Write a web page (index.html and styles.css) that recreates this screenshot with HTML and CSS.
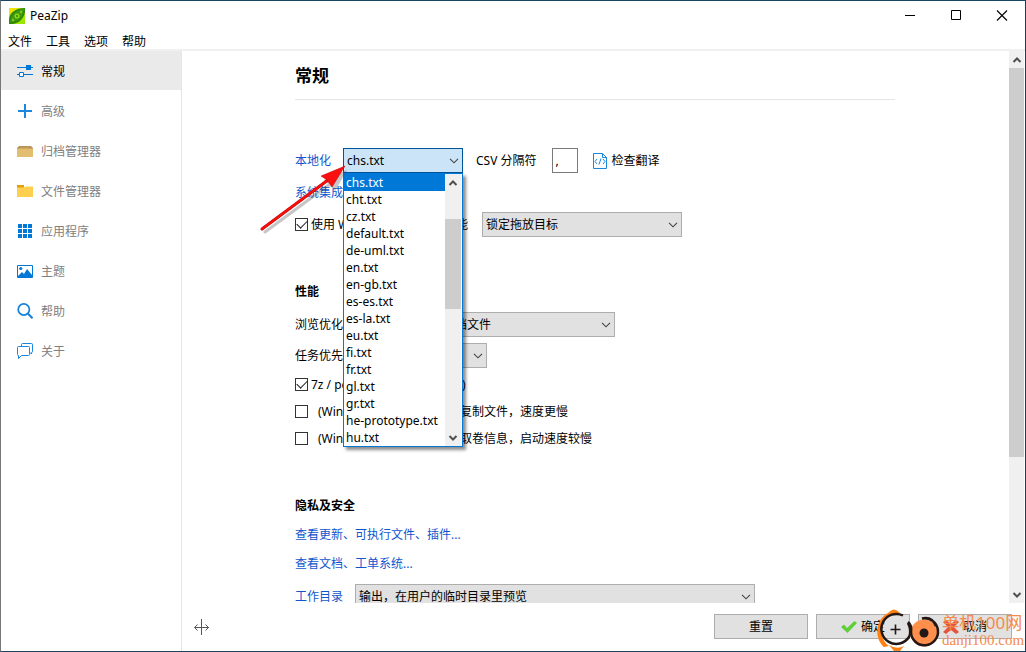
FILE: index.html
```html
<!DOCTYPE html>
<html lang="zh-CN">
<head>
<meta charset="utf-8">
<title>PeaZip</title>
<link rel="stylesheet" href="styles.css">
</head>
<body>
<div class="window">
  <header class="titlebar">
    <svg class="app-icon" width="16" height="16" viewBox="0 0 16 16">
      <defs><linearGradient id="lime" x1="0" y1="0" x2="1" y2="1"><stop offset="0" stop-color="#ffe400"/><stop offset="1" stop-color="#8be800"/></linearGradient></defs>
      <rect width="16" height="16" fill="url(#lime)"/>
      <path d="M0 16V11C1 4 7 0 16 0V4C15 11 9 16 3 16Z" fill="#2f8a0a"/>
      <path d="M1 14C2 7 7 2 15 1C14 9 9 14 1 14Z" fill="#439b14"/>
      <circle cx="8" cy="8" r="2.500" fill="#8fdc10"/><circle cx="8" cy="8" r="1.200" fill="#3f9a10"/>
      <circle cx="12" cy="4" r="1.200" fill="#7fcc18"/><circle cx="4" cy="12" r="1.200" fill="#7fcc18"/>
    </svg>
    <h1 class="app-name">PeaZip</h1>
    <div class="controls">
      <button class="control" aria-label="最小化"><svg width="12" height="12" viewBox="0 0 12 12"><path d="M1 5.500H11" stroke="#000"/></svg></button>
      <button class="control" aria-label="最大化"><svg width="12" height="12" viewBox="0 0 12 12"><path d="M1.500 .5H10.500V9.500H1.500Z" fill="none" stroke="#000"/></svg></button>
      <button class="control" aria-label="关闭"><svg width="12" height="12" viewBox="0 0 12 12"><path d="M1 .5L11 10.500M11 .5L1 10.500" stroke="#000" stroke-width="1.100"/></svg></button>
    </div>
  </header>
  <nav class="menubar">
    <button class="menu">文件</button><button class="menu">工具</button><button class="menu">选项</button><button class="menu">帮助</button>
  </nav>
  <div class="body">
    <nav class="sidebar">
      <button class="side-item active"><svg class="side-icon" viewBox="0 0 16 16"><path d="M0 4.500H9M14 4.500H16M0 11.500H2M7 11.500H16" stroke="#0078d7"/><path d="M9 2H14V7H9Z" fill="#0078d7"/><path d="M2.500 9.500H6.500V13.500H2.500Z" fill="#fff" stroke="#0078d7"/></svg>常规</button>
      <button class="side-item"><svg class="side-icon" viewBox="0 0 16 16"><path d="M1 8H15M8 1V15" stroke="#1a86dc" stroke-width="2"/></svg>高级</button>
      <button class="side-item"><svg class="side-icon" viewBox="0 0 16 16"><path d="M2 3H14L16 5V7H0V5Z" fill="#b4935a"/><path d="M0 5.500H3L4 4.500H12L13 5.500H16V14H0Z" fill="#e3bd70"/><path d="M3 5H13" stroke="#b99555"/></svg>归档管理器</button>
      <button class="side-item"><svg class="side-icon" viewBox="0 0 16 16"><path d="M0 2H7V5H0Z" fill="#e3a008"/><path d="M0 4.500H7L8 3.500H16V14H0Z" fill="#ffcf4f"/></svg>文件管理器</button>
      <button class="side-item"><svg class="side-icon" viewBox="0 0 16 16"><path d="M1 1H5V5H1ZM6 1H10V5H6ZM11 1H15V5H11ZM1 6H5V10H1ZM6 6H10V10H6ZM11 6H15V10H11ZM1 11H5V15H1ZM6 11H10V15H6ZM11 11H15V15H11Z" fill="#0078d7"/></svg>应用程序</button>
      <button class="side-item"><svg class="side-icon" viewBox="0 0 16 16"><path d="M.5 2.500H15.500V14.500H.5Z" fill="#fff" stroke="#0078d7"/><path d="M1 14V13L5 9L7 11L10 6L15 12V14Z" fill="#0078d7"/><circle cx="3.800" cy="5.500" r="1.600" fill="#0078d7"/></svg>主题</button>
      <button class="side-item"><svg class="side-icon" viewBox="0 0 16 16"><circle cx="6.800" cy="6.500" r="5.600" fill="none" stroke="#1480da" stroke-width="1.700"/><path d="M10.800 10.500L15.500 15.200" stroke="#1480da" stroke-width="2"/></svg>帮助</button>
      <button class="side-item"><svg class="side-icon" viewBox="0 0 16 16"><path d="M4.500 3V1.500Q4.500 .5 5.500 .5H14.500Q15.500 .5 15.500 1.500V8.500Q15.500 9.500 14.500 9.500V11L13 9.500" fill="none" stroke="#1a86dc"/><path d="M1.500 3.500H11.500Q12.500 3.500 12.500 4.500V11.500Q12.500 12.500 11.500 12.500H4.500L1.500 15.500V12.500Q.5 12.500 .5 11.500V4.500Q.5 3.500 1.500 3.500Z" fill="none" stroke="#1a86dc"/></svg>关于</button>
    </nav>
    <main class="main">
      <div class="scroll-area">
        <form class="page">
          <h2 class="page-title">常规</h2>
          <div class="row first">
            <a class="link" href="#">本地化</a>
            <div class="combo language">
              <select class="field focused" aria-label="本地化"><option>chs.txt</option></select>
              <svg class="chevron" viewBox="0 0 10 6"><path d="M1 .8L5 4.800L9 .8"/></svg>
              <div class="popup">
                <ul class="options" role="listbox" aria-label="语言文件">
                  <li class="option selected" role="option" aria-selected="true">chs.txt</li>
                  <li class="option" role="option">cht.txt</li>
                  <li class="option" role="option">cz.txt</li>
                  <li class="option" role="option">default.txt</li>
                  <li class="option" role="option">de-uml.txt</li>
                  <li class="option" role="option">en.txt</li>
                  <li class="option" role="option">en-gb.txt</li>
                  <li class="option" role="option">es-es.txt</li>
                  <li class="option" role="option">es-la.txt</li>
                  <li class="option" role="option">eu.txt</li>
                  <li class="option" role="option">fi.txt</li>
                  <li class="option" role="option">fr.txt</li>
                  <li class="option" role="option">gl.txt</li>
                  <li class="option" role="option">gr.txt</li>
                  <li class="option" role="option">he-prototype.txt</li>
                  <li class="option" role="option">hu.txt</li>
                </ul>
                <div class="scrollbar popup-bar">
                  <svg class="arrow" viewBox="0 0 10 6"><path d="M1.500 5L5 1.500L8.500 5"/></svg>
                  <div class="track"><div class="thumb popup-thumb"></div></div>
                  <svg class="arrow" viewBox="0 0 10 6"><path d="M1.500 1L5 4.500L8.500 1"/></svg>
                </div>
              </div>
              <svg class="pointer" width="100" height="76" viewBox="0 0 100 76">
                <g opacity=".3"><path d="M9 70L74 22" stroke="#444" stroke-width="3" stroke-linecap="round"/><path d="M91 8L68 18L79 29Z" fill="#444"/></g>
                <path d="M6 67L72 18" stroke="#c80000" stroke-width="3" stroke-linecap="round"/><path d="M6 67L72 18" stroke="#fa1010" stroke-width="2" stroke-linecap="round"/>
                <path d="M89 4L65 14L71 18L76 25Z" fill="#fa1010" stroke="#b80000" stroke-width=".5"/>
              </svg>
            </div>
            <label class="inline" for="csv">CSV 分隔符</label>
            <input class="csv" id="csv" type="text" value=",">
            <button class="check-translation" type="button"><svg width="14" height="16" viewBox="0 0 14 16"><path d="M.5 .5H9.500L13.500 4.500V15.500H.5Z" fill="#fff" stroke="#1a86dc"/><path d="M9.500 .5V4.500H13.500" fill="none" stroke="#1a86dc"/><path d="M4 6L2 8.500L4 11M10 6L12 8.500L10 11M8 5.500L6 11.500" fill="none" stroke="#1a86dc"/></svg>检查翻译</button>
          </div>
          <div class="row integration"><a class="link" href="#">系统集成</a></div>
          <div class="row">
            <label class="check tight"><input class="box" type="checkbox" checked><span class="lead">使用 Windows 拖放功</span><span>能</span></label>
            <div class="combo drop-target"><select class="field" aria-label="拖放目标"><option>锁定拖放目标</option></select><svg class="chevron" viewBox="0 0 10 6"><path d="M1 .8L5 4.800L9 .8"/></svg></div>
          </div>

          <h3 class="section">性能</h3>
          <div class="row">
            <label for="browse">浏览优化</label>
            <div class="combo browse"><select class="field" id="browse"><option>不展开显示完整归档文件</option></select><svg class="chevron" viewBox="0 0 10 6"><path d="M1 .8L5 4.800L9 .8"/></svg></div>
          </div>
          <div class="row close">
            <label for="priority">任务优先级</label>
            <div class="combo priority"><select class="field" id="priority"><option>普通</option></select><svg class="chevron" viewBox="0 0 10 6"><path d="M1 .8L5 4.800L9 .8"/></svg></div>
          </div>
          <label class="check line tight"><input class="box" type="checkbox" checked><span class="lead seven">7z / pea 多线程压缩 (推荐</span><span>)</span></label>
          <label class="check line"><input class="box" type="checkbox"><span class="lead wide">(Windows) 拖放时先</span><span>复制文件，速度更慢</span></label>
          <label class="check line"><input class="box" type="checkbox"><span class="lead wide">(Windows) 启动时获</span><span>取卷信息，启动速度较慢</span></label>

          <h3 class="section privacy">隐私及安全</h3>
          <div class="row text-row"><a class="link" href="#">查看更新、可执行文件、插件...</a></div>
          <div class="row text-row"><a class="link" href="#">查看文档、工单系统...</a></div>
          <div class="row">
            <a class="link" href="#">工作目录</a>
            <div class="combo workdir"><select class="field" aria-label="工作目录"><option>输出，在用户的临时目录里预览</option></select><svg class="chevron" viewBox="0 0 10 6"><path d="M1 .8L5 4.800L9 .8"/></svg></div>
          </div>
        </form>
        <div class="scrollbar">
          <svg class="arrow" viewBox="0 0 10 6"><path d="M1.500 5L5 1.500L8.500 5"/></svg>
          <div class="track"><div class="thumb"></div></div>
          <svg class="arrow" viewBox="0 0 10 6"><path d="M1.500 1L5 4.500L8.500 1"/></svg>
        </div>
      </div>
      <footer class="footer">
        <svg class="resize" width="16" height="16" viewBox="0 0 16 16"><path d="M7.500 0V16M1 8.500H15M3.500 5.500L.5 8.500L3.500 11.500M11.500 5.500L14.500 8.500L11.500 11.500" fill="none" stroke="#555"/></svg>
        <button class="action">重置</button>
        <button class="action"><svg width="16" height="14" viewBox="0 0 16 14"><path d="M0 7L3 4.500L6 8L13.500 1L16 3L6.500 13Z" fill="#5fcf3c"/></svg>确定</button>
        <button class="action"><svg width="16" height="14" viewBox="0 0 16 14"><path d="M0 2L3 0L8 4L13 0L16 2L11 7L16 12L13 14L8 10L3 14L0 12L5 7Z" fill="#e4553f"/></svg>取消</button>
      </footer>
    </main>
  </div>
  <svg class="watermark" width="150" height="42" viewBox="0 0 150 42">
    <path d="M9 38C-1 29 0 11 13 4Q19 -3 25 4C12 5 4 16 7 27Q9 34 14 37Z" fill="#ff7f11"/>
    <path d="M14 36Q22 41 29 37L25 42H19Z" fill="#ff7f11"/>
    <path d="M28 6.500A15 15 0 1 0 34 28Q37 22 33 14" fill="none" stroke="#231815" stroke-width="2.500"/>
    <path d="M20.500 15.500V25.500M15.500 20.500H25.500" stroke="#231815" stroke-width="1.600"/>
    <circle cx="49" cy="24" r="13.500" fill="#ff8f4a"/>
    <path d="M33 13Q37 16 36 23A13.500 13.500 0 1 0 47 9.500Q57 7 61 17" fill="none" stroke="#231815" stroke-width="2.500"/>
    <circle cx="49" cy="24" r="4.500" fill="#231815"/>
    <text class="mark-name" x="67" y="20">单机100网</text>
    <text class="mark-site" x="67" y="36">danji100.com</text>
  </svg>
</div>
</body>
</html>
```
FILE: styles.css
```css
* { box-sizing: border-box; }
body {
  margin: 0;
  background: #fff;
  color: #000;
  font: 12px/20px "Noto Sans", "Noto Sans CJK SC", sans-serif;
}
button, input, select { font: inherit; color: inherit; }
button { border: 0; background: none; padding: 0; }
svg { display: block; flex: none; }

.window {
  position: relative;
  display: flex;
  flex-direction: column;
  height: 100vh;
  border: 1px solid #1c4563;
  border-left-color: #777;
  border-right-color: #1c3a66;
  overflow: hidden;
}
.titlebar { display: flex; align-items: center; height: 29px; padding-left: 8px; }
.app-name { margin: 0 auto 0 5px; font-size: 12px; font-weight: 400; }
.controls { display: flex; }
.control { display: grid; place-items: center; width: 46px; height: 29px; }
.menubar { display: flex; gap: 14px; height: 21px; padding: 0 7px; border-bottom: 2px solid #f0f0f0; }
.menu { line-height: 20px; padding-top: 2px; }

.body { display: flex; flex: 1; min-height: 0; }
.sidebar { display: flex; flex-direction: column; gap: 1px; width: 181px; border-right: 1px solid #e5e5e5; }
.side-item { display: flex; align-items: center; gap: 8px; height: 39px; padding: 2px 16px 0; color: #808080; }
.side-item.active { background: #eaeaea; color: #000; }
.side-icon { width: 16px; height: 16px; margin-bottom: 2px; }

.main { display: flex; flex: 1; flex-direction: column; min-width: 0; }
.scroll-area { display: flex; flex: 1; min-height: 0; overflow: hidden; padding-right: 1px; }
.page { flex: 1; min-width: 0; padding: 0 114px 0 113px; }
.page-title { margin: 0; padding: 13px 0 11px; border-bottom: 1px solid #e5e5e5; font-size: 17px; line-height: 24px; }
.row { display: flex; align-items: center; gap: 12px; height: 25px; margin-top: 10px; white-space: nowrap; }
.row.first { margin-top: 48px; }
.row.close { margin-top: 6px; }
.row.integration { height: 18px; margin-top: 11px; }
.text-row { height: 20px; margin-top: 9px; }
.section { margin: 45px 0 0; font-size: 12px; }
.section.privacy { margin-top: 47px; }
.link { color: #1155cc; text-decoration: none; }

.combo { position: relative; height: 25px; }
.field {
  display: block;
  width: 100%;
  height: 25px;
  padding: 0 24px 0 3px;
  border: 1px solid #adadad;
  border-radius: 0;
  background: #e1e1e1;
  appearance: none;
  outline: 0;
}
.field.focused { background: #cce4f7; border-color: #005499; }
.chevron { position: absolute; right: 4px; top: 10px; width: 10px; height: 6px; pointer-events: none; }
.chevron path { fill: none; stroke: #444; stroke-width: 1.1; }
.language { width: 120px; }
.drop-target { width: 200px; }
.browse { width: 260px; }
.priority { width: 120px; }
.workdir { width: 400px; }
.inline { padding: 0 3px 0 1px; }
.csv { width: 26px; height: 25px; padding: 0 3px; border: 1px solid #7a7a7a; outline: 0; }
.check-translation { display: flex; align-items: center; gap: 5px; margin-left: 3px; }

.popup {
  position: absolute;
  z-index: 2;
  top: 100%;
  left: 0;
  display: flex;
  width: 100%;
  padding-right: 1px;
  border: 1px solid #0078d7;
  background: #fff;
  box-shadow: 3px 3px 3px rgba(0, 0, 0, .45);
}
.options { flex: 1; margin: 0; padding: 0; list-style: none; }
.option { height: 17px; padding-left: 2px; line-height: 17px; }
.option.selected { background: #0078d7; color: #fff; }
.pointer { position: absolute; z-index: 3; left: -87px; top: 14px; pointer-events: none; }

.scrollbar { display: flex; flex-direction: column; align-items: center; width: 15px; background: #f0f0f0; }
.arrow { width: 10px; height: 6px; margin: 6px 0 5px; }
.arrow path { fill: none; stroke: #505050; stroke-width: 2; }
.track { display: flex; flex: 1; flex-direction: column; width: 100%; }
.thumb { height: 75%; background: #cdcdcd; }
.popup-bar { width: 16px; }
.popup-thumb { height: 38%; margin-top: 28px; }

.check { display: flex; align-items: center; gap: 10px; height: 20px; white-space: nowrap; }
.check.tight { gap: 3px; }
.check span + span { margin-left: -10px; }
.check.tight span + span { margin-left: -3px; }
.check.line { margin-top: 7px; }
.row .check { width: 175px; }
.lead { width: 145px; overflow: hidden; }
.lead.seven { width: 151px; }
.lead.wide { width: 142px; }
.box {
  display: grid;
  place-items: center;
  width: 13px;
  height: 13px;
  margin: 0 0 1px;
  border: 1px solid #333;
  background: #fff;
  appearance: none;
}
.box:checked::before {
  content: "";
  width: 9px;
  height: 5px;
  margin-bottom: 3px;
  border: solid #222;
  border-width: 0 0 1px 1px;
  transform: rotate(-45deg);
}

.footer { display: flex; align-items: center; gap: 8px; height: 48px; padding: 0 13px 1px 12px; }
.resize { margin-right: auto; }
.action {
  display: flex;
  align-items: center;
  justify-content: center;
  gap: 4px;
  width: 94px;
  height: 25px;
  border: 1px solid #adadad;
  background: #e1e1e1;
}
.watermark { position: absolute; right: 0; bottom: 0; pointer-events: none; }
.mark-name { fill: #f58a4b; font: 17px "Noto Sans", "Noto Sans CJK SC", sans-serif; }
.mark-site { fill: #f58a4b; font: 15px "Liberation Serif", serif; }
```
